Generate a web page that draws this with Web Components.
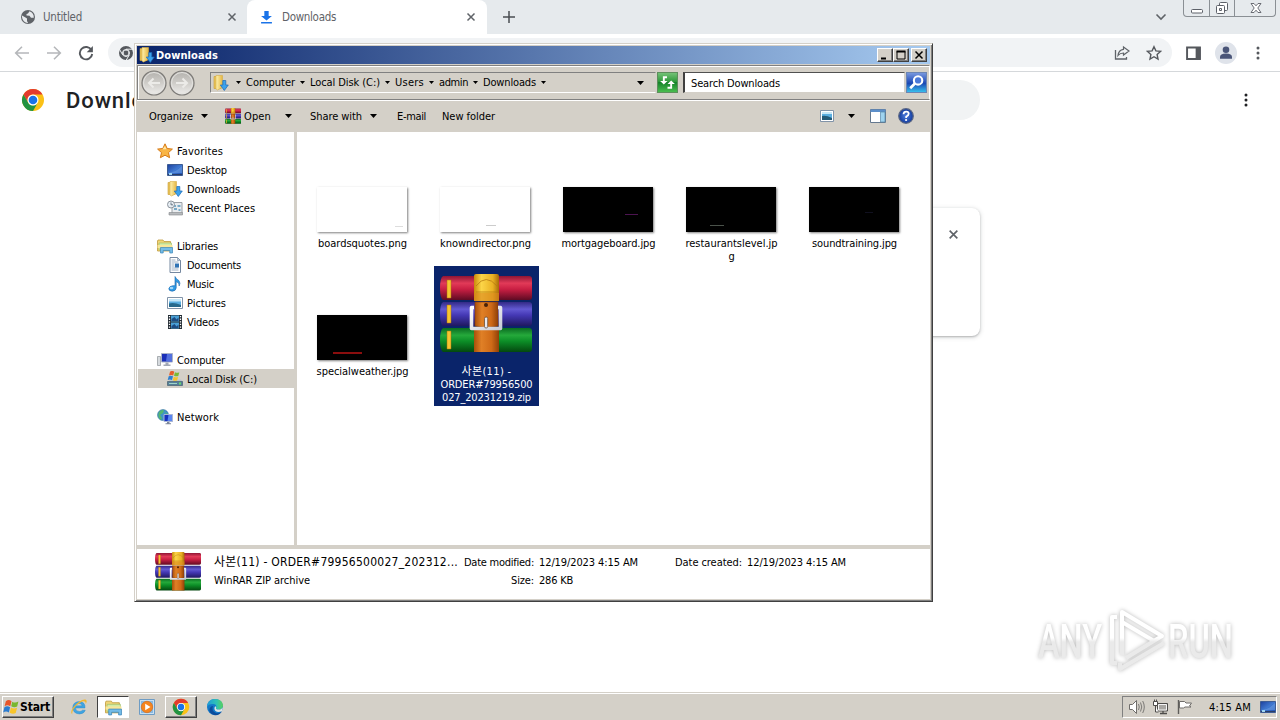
<!DOCTYPE html>
<html lang="en">
<head>
<meta charset="utf-8">
<title>Downloads</title>
<style>
  body {
    margin: 0;
    width: 1280px;
    height: 720px;
    overflow: hidden;
    background: #fff;
    color: #000;
    font: 11px/13px "DejaVu Sans Condensed", "DejaVu Sans", "Noto Sans CJK KR", sans-serif;
  }
</style>
</head>
<body>
<desktop-screen></desktop-screen>

<script>
// ---------- icons ----------
const downloadFolder = `
  <defs><linearGradient id="f" x2="1"><stop stop-color="#fff3b0"/><stop offset="1" stop-color="#e3b542"/></linearGradient></defs>
  <path d="M1 1.5h7v12H1z" fill="#e9c55c" stroke="#c99c33" stroke-width=".6"/>
  <path d="M3 .5h6.500v12L4.500 15 3 14z" fill="url(#f)" stroke="#d6ac45" stroke-width=".6"/>
  <path d="M9.800 5.500h3v4.500h2.500L11.300 15.500 7.300 10h2.500z" fill="#3ba2ec" stroke="#1b69b5" stroke-width=".7"/>`;

const books = `
  <defs>
    <linearGradient id="r" y2="1" x2="0"><stop stop-color="#8f1534"/><stop offset=".3" stop-color="#e23a58"/><stop offset=".55" stop-color="#c91f43"/><stop offset="1" stop-color="#5e0b23"/></linearGradient>
    <linearGradient id="b" y2="1" x2="0"><stop stop-color="#332a86"/><stop offset=".3" stop-color="#6259d2"/><stop offset=".55" stop-color="#4438b4"/><stop offset="1" stop-color="#1f1860"/></linearGradient>
    <linearGradient id="g" y2="1" x2="0"><stop stop-color="#0b6b21"/><stop offset=".3" stop-color="#25a93b"/><stop offset=".55" stop-color="#0c8e27"/><stop offset="1" stop-color="#04480f"/></linearGradient>
    <linearGradient id="o"><stop stop-color="#a9500b"/><stop offset=".3" stop-color="#e08026"/><stop offset=".7" stop-color="#cf6a17"/><stop offset="1" stop-color="#8f4008"/></linearGradient>
    <linearGradient id="y"><stop stop-color="#c98a0a"/><stop offset=".3" stop-color="#fcd548"/><stop offset=".75" stop-color="#eab123"/><stop offset="1" stop-color="#a86a08"/></linearGradient>
    <linearGradient id="s" y2="1"><stop stop-color="#fff"/><stop offset="1" stop-color="#c9ccd6"/></linearGradient>
  </defs>
  <path d="M3 2h86q3 0 3 3v18q0 3-3 3H3q-3-2-3-12T3 2z" fill="url(#r)"/>
  <path d="M3 28h86q3 0 3 3v18q0 3-3 3H3q-3-2-3-12t3-12z" fill="url(#b)"/>
  <path d="M3 54h86q3 0 3 3v18q0 3-3 3H3q-3-2-3-12t3-12z" fill="url(#g)"/>
  <path d="M7 6h4v18H7zM7 31h4v18H7zM7 57h4v18H7z" fill="#f7c531" stroke="#a8700c" stroke-width=".5"/>
  <path d="M34 55h25v23H34z" fill="url(#o)"/>
  <path d="M35 28h23v24q-11 3-23 0z" fill="url(#o)" stroke="#8a3c06" stroke-width=".6"/>
  <path d="M34 2q0-2 2-2h21q2 0 2 2v25H34z" fill="url(#y)"/>
  <path d="M36 12q10-13 21 0M36 18h21" fill="none" stroke="#b87a12" stroke-width=".8"/>
  <path d="M34 19h25v8H34z" fill="#d9861c" opacity=".6"/>
  <circle cx="46" cy="31" r="2" fill="#4a2206"/>
  <path d="M34 33.500H31.500v21h29v-21H58" fill="none" stroke="url(#s)" stroke-width="3.600" stroke-linejoin="round"/>
  <rect x="44.500" y="43" width="3.200" height="11" rx="1.500" fill="#e9e9f0" stroke="#5b4332" stroke-width=".7"/>`;

const chromeLogo = `
  <circle cx="12" cy="12" r="11" fill="#fbc116"/>
  <path d="M2.470 6.500A11 11 0 0 1 21.530 6.500H12A5.500 5.500 0 0 0 7.240 14.750z" fill="#e33b2e"/>
  <path d="M2.470 6.500A11 11 0 0 0 12 23l4.760-8.250A5.500 5.500 0 0 1 7.240 14.750z" fill="#229342"/>
  <circle cx="12" cy="12" r="5.500" fill="#fff"/><circle cx="12" cy="12" r="4.300" fill="#1a73e8"/>`;

const screen = `
  <defs><linearGradient id="d" x2="1" y2="1"><stop stop-color="#1c3f9c"/><stop offset=".5" stop-color="#3f78d0"/><stop offset="1" stop-color="#1a4bb0"/></linearGradient></defs>
  <path d="M.5 2.500h15v11H.5z" fill="url(#d)" stroke="#3d5c93"/>
  <path d="M1 11q7 0 14-7v7z" fill="#75a8e8" opacity=".5"/><path d="M1 12h14v1H1z" fill="#2a3d66"/><path d="M2 11h3v2H2z" fill="#9fd4f1"/>`;

// name: [viewBox, markup]
const ICONS = {
  globe: ['0 0 16 16', `<circle cx="8" cy="8" r="7" fill="#5f6368"/><path d="M2 6.500l3.500 2 1.500 1v2.500l1.200 2.300Q2.500 13.500 2 8zM9.500 2.300L8 4.500 6.500 5v1.500l3 .3 1.500 2h2.800Q14 4 9.500 2.300z" fill="#e7eaed"/>`],
  x: ['0 0 10 10', `<path d="M1.500 1.500l7 7m0-7l-7 7" stroke="currentColor" stroke-width="1.500"/>`],
  dlblue: ['0 0 12 14', `<path d="M4 1h4v5h3L6 10.500 1 6h3zM1 12h10v1.600H1z" fill="#1a73e8"/>`],
  plus: ['0 0 12 12', `<path d="M6 0v12M0 6h12" stroke="#4a4d51" stroke-width="1.500"/>`],
  back: ['0 0 16 16', `<path d="M15 8H2M8 1.700L1.700 8 8 14.300" fill="none" stroke="currentColor" stroke-width="1.600"/>`],
  forward: ['0 0 16 16', `<path d="M1 8h13M8 1.700L14.300 8 8 14.300" fill="none" stroke="currentColor" stroke-width="1.600"/>`],
  reload: ['0 0 16 16', `<path d="M13.500 5.200A6.200 6.200 0 1 0 14.200 9" fill="none" stroke="#55585d" stroke-width="1.900"/><path d="M14.900 1v6.200H8.700z" fill="#55585d"/>`],
  chromegray: ['0 0 16 16', `<circle cx="8" cy="8" r="5" fill="none" stroke="#55585d" stroke-width="4"/><circle cx="8" cy="8" r="2.400" fill="#55585d"/><path d="M8 4.200h7M4.700 9.900L1.300 4M11.300 9.900L8 15.500" stroke="#f1f3f4" stroke-width="1"/><circle cx="8" cy="8" r="3.500" fill="none" stroke="#f1f3f4"/>`],
  chevron: ['0 0 12 8', `<path d="M1.500 1.500L6 6l4.500-4.500" fill="none" stroke="#5f6368" stroke-width="1.600"/>`],
  share: ['0 0 16 16', `<path d="M1.500 5v9h11v-2" fill="none" stroke="#5f6368" stroke-width="1.300"/><path d="M9.500 2l5.500 4-5.500 4V8Q6 8 4 10.500 4.500 5 9.500 4.300z" fill="none" stroke="#5f6368" stroke-width="1.200"/>`],
  star: ['0 0 16 16', `<path d="M8 1.700l1.900 4.200 4.600.5-3.400 3.100.9 4.500-4-2.300L4 14l.9-4.500L1.500 6.400l4.600-.5z" fill="none" stroke="#55585d" stroke-width="1.400"/>`],
  side: ['0 0 14 14', `<path d="M1 1.500h12v11.500H1z" fill="#fff" stroke="#55585d" stroke-width="1.800"/><path d="M9 1h4.500v12H9z" fill="#55585d"/>`],
  person: ['0 0 22 22', `<circle cx="11" cy="11" r="11" fill="#dfe3ea"/><circle cx="11" cy="7.700" r="3.300" fill="#4a5578"/><path d="M5 16.800V15q0-3.500 6-3.500t6 3.500v1.800z" fill="#4a5578"/>`],
  dots: ['0 0 4 14', `<circle cx="2" cy="2" r="1.500" fill="currentColor"/><circle cx="2" cy="7" r="1.500" fill="currentColor"/><circle cx="2" cy="12" r="1.500" fill="currentColor"/>`],
  winmin: ['0 0 14 14', `<rect x="1.500" y="8.500" width="11" height="3.500" rx="1" fill="#fff" stroke="#5c6068"/>`],
  winrest: ['0 0 14 14', `<rect x="4.500" y="1.500" width="8" height="8" rx="1" fill="#fff" stroke="#5c6068"/><rect x="1.500" y="4.500" width="8" height="8" rx="1" fill="#fff" stroke="#5c6068"/><path d="M4.500 7.500h2v2h-2z" fill="#fff" stroke="#5c6068"/>`],
  winclose: ['0 0 14 14', `<path d="M2 2.500h3l2 2.300 2-2.300h3L8.800 7l3.200 4.500H9L7 9.200l-2 2.300H2L5.200 7z" fill="#fff" stroke="#5c6068" stroke-width=".9"/>`],
  chrome: ['0 0 24 24', chromeLogo],
  dlfolder: ['0 0 16 16', downloadFolder],
  rar: ['0 0 92 79', books],
  desktop: ['0 0 16 16', screen],
  navl: ['0 0 26 26', `<defs><linearGradient id="c" x2="0" y2="1"><stop stop-color="#b2b0ac"/><stop offset=".5" stop-color="#cfcdc9"/><stop offset="1" stop-color="#efeeec"/></linearGradient></defs><circle cx="13" cy="13" r="12" fill="url(#c)" stroke="#7c7a77" stroke-width="1.200"/><circle cx="13" cy="13" r="10.500" fill="none" stroke="#e4e3e0"/><path d="M19 13H8.500M12.500 8.500L8 13l4.500 4.500" fill="none" stroke="#ecebe8" stroke-width="2"/>`],
  navr: ['0 0 26 26', `<defs><linearGradient id="c" x2="0" y2="1"><stop stop-color="#b2b0ac"/><stop offset=".5" stop-color="#cfcdc9"/><stop offset="1" stop-color="#efeeec"/></linearGradient></defs><circle cx="13" cy="13" r="12" fill="url(#c)" stroke="#7c7a77" stroke-width="1.200"/><circle cx="13" cy="13" r="10.500" fill="none" stroke="#e4e3e0"/><path d="M7 13h10.500M13.500 8.500L18 13l-4.500 4.500" fill="none" stroke="#ecebe8" stroke-width="2"/>`],
  arrow: ['0 0 7 4', `<path d="M0 0h7L3.500 4z" fill="#000"/>`],
  refresh: ['0 0 20 20', `<defs><linearGradient id="k" x2="0" y2="1"><stop stop-color="#77c47a"/><stop offset=".45" stop-color="#2f9a3b"/><stop offset=".5" stop-color="#15832a"/><stop offset="1" stop-color="#4cc050"/></linearGradient></defs><path d="M.5.5h19v19H.5z" fill="url(#k)" stroke="#5d8f5c"/><path d="M9.500 5H6.500v4M13.500 10.500V15h-3.500" fill="none" stroke="#fff" stroke-width="1.800"/><path d="M3 8.500h7L6.500 12zM10 11.500h7L13.500 8z" fill="#fff"/>`],
  search: ['0 0 20 20', `<defs><linearGradient id="k" x2="0" y2="1"><stop stop-color="#7c9be0"/><stop offset=".45" stop-color="#2a55bd"/><stop offset=".55" stop-color="#1b49b4"/><stop offset="1" stop-color="#39c5f0"/></linearGradient></defs><path d="M.5.5h19v19H.5z" fill="url(#k)" stroke="#6b85b4"/><circle cx="11.500" cy="8" r="4" fill="#4b79d8" stroke="#fff" stroke-width="2"/><path d="M8.500 11l-4.500 4.500" stroke="#fff" stroke-width="2.600"/>`],
  min: ['0 0 10 10', `<path d="M1 7.500h5v2H1z" fill="#000"/>`],
  max: ['0 0 10 10', `<path d="M1 1.500h8v7.500H1z" fill="none" stroke="#000"/><path d="M.5.5h9v2h-9z"/>`],
  close: ['0 0 10 10', `<path d="M1.500 1.500l7 7m0-7l-7 7" stroke="#000" stroke-width="1.500"/>`],
  view: ['0 0 14 12', `<path d="M.5.500h13v11H.5z" fill="#fff" stroke="#8193a8"/><path d="M2 2h10v8H2z" fill="#5aaee0"/><path d="M2 10V6q4-1 10 2v2z" fill="#245a78"/><path d="M2 2h10v2H2z" fill="#c6e7f8"/>`],
  pane: ['0 0 16 14', `<path d="M.5.500h15v13H.5z" fill="#fff" stroke="#64788f"/><path d="M.5.500h15v2.500H.5z" fill="#5c8fca"/><path d="M10.500 3h4.500v10h-4.500z" fill="#9fd3ef" stroke="#5687a8" stroke-width=".7"/>`],
  help: ['0 0 16 16', `<defs><radialGradient id="h"><stop stop-color="#4f80df"/><stop offset="1" stop-color="#123a9c"/></radialGradient></defs><circle cx="8" cy="8" r="7.300" fill="url(#h)" stroke="#5b6784" stroke-width="1.200"/><path d="M5.500 6.200Q5.700 3.600 8.200 3.600q2.500 0 2.500 2.100 0 1.400-2.500 3v1.300" fill="none" stroke="#fff" stroke-width="1.800"/><circle cx="8.100" cy="12" r="1.100" fill="#fff"/>`],
  fav: ['0 0 16 16', `<path d="M8 .8l2.200 4.700 5.200.6-3.900 3.500 1.100 5.100L8 12.200l-4.600 2.500 1.100-5.100L.6 6.100l5.200-.6z" fill="#f9b545" stroke="#d67a18"/><path d="M8 3l1.400 3.300H5.500z" fill="#ffe6a6"/>`],
  recent: ['0 0 16 16', `<path d="M5 2.500h10v11H5z" fill="#e9ecef" stroke="#9aa0a6"/><path d="M7 5h2v2H7zm3.500 0h3v2h-3zM7 8h3v2H7zm4.500 1h2v2h-2z" fill="#78aac8"/><path d="M2 12.500h13.500V15H2z" fill="#b7babd" stroke="#84888c" stroke-width=".6"/><circle cx="4" cy="4.500" r="3.500" fill="#e6edf3" stroke="#8c949c"/><path d="M4 2.500v2.300h2" fill="none" stroke="#52606c" stroke-width=".8"/>`],
  lib: ['0 0 16 16', `<path d="M.5 3V13h13V3.500H7L6 2H1z" fill="#f0d576" stroke="#bf9b3c" stroke-width=".8"/><path d="M2 5h12.500v7H2z" fill="#d3eca6" stroke="#9cba65" stroke-width=".6"/><path d="M.5 7h15v3H.5z" fill="#f8e69a"/><path d="M3.500 15V9.500h12V15h-2.700v-2.500H6.200V15z" fill="#74bce8" stroke="#3b86b9" stroke-width=".7"/>`],
  doc: ['0 0 16 16', `<path d="M3 .5h7.500l3 3v12H3z" fill="#fff" stroke="#7588a0"/><path d="M10.500.5v3h3z" fill="#c7d5e4" stroke="#7588a0" stroke-width=".6"/><path d="M4.500 3h4M4.500 5h7M4.500 7h3M4.500 9h3M4.500 11h7M4.500 13h7" stroke="#9eb0c3"/><path d="M8 6.500h4v4H8z" fill="#3174b4"/>`],
  music: ['0 0 16 16', `<path d="M8 .5q1 2.500 4 4.200 1.800 2.500.2 5.300.5-3-3-4.500V12q-.3 3-4 3.200-3.400-.2-3.400-2.500.3-2.600 4.200-3H8z" fill="#2e9ae6" stroke="#1765ab" stroke-width=".6"/><ellipse cx="4.500" cy="12" rx="1.800" ry="1.200" fill="#9ed6fa"/>`],
  pic: ['0 0 16 16', `<path d="M.5 2.500h15v11H.5z" fill="#fff" stroke="#8193a8"/><path d="M2 4h12v8H2z" fill="#5aaee0"/><path d="M2 4h12v2.500H2z" fill="#c6e7f8"/><path d="M2 12V8.500q5-1.500 12 1.500v2z" fill="#27698c"/>`],
  video: ['0 0 16 16', `<path d="M1 1h14v14H1z" fill="#222b33"/><path d="M4 1.500h8v6H4zM4 8.500h8v6H4z" fill="#4aa0d6"/><path d="M4.500 5l3-2 2 2.500 2-2v3.500h-7zM4.500 12l3-2 2 2.500 2-2V14h-7z" fill="#1d4c82"/><path d="M2.500 2v12M13.500 2v12" stroke="#fff" stroke-width="1.300" stroke-dasharray="1.300 1.300"/>`],
  computer: ['0 0 16 16', `<path d="M.5 4.500h3v9h-3z" fill="#d6dade" stroke="#8c9298" stroke-width=".7"/><path d="M4.500 1.500h11v8.500h-11z" fill="#1a2fb8" stroke="#aab3c8"/><path d="M10 2h5v7.500H9z" fill="#6587ec" opacity=".75"/><path d="M8.500 10.500h3v2h2v1.500h-7v-1.500h2z" fill="#a2a8b4"/>`],
  disk: ['0 0 16 16', `<path d="M1.500 10.500L3 8.500h11l1.500 2z" fill="#b9c5cf"/><path d="M.5 10.500h15v4H.5z" fill="#567e98" stroke="#44606f" stroke-width=".7"/><path d="M2 12h8v1H2z" fill="#9fd6c9"/><path d="M12 11.500h2v2h-2z" fill="#66e069"/><path d="M3 .7q2-1.500 4.300 0L6.200 4.500q-2-1.200-4.200 0z" fill="#e85d2a"/><path d="M8 1.300q2 1 4.300 0l-1 3.600q-2 1-4.300-.2z" fill="#7bb934"/><path d="M1.700 5.300q2-1.200 4.300 0L5 9q-2-1.200-4.300 0z" fill="#2d7fd0"/><path d="M6.800 5.700q2 1.200 4.300.2l-1 3.500q-2 1-4.300-.2z" fill="#f6c22b"/>`],
  network: ['0 0 16 16', `<circle cx="6" cy="6" r="5.500" fill="#3f93c8" stroke="#27688f" stroke-width=".5"/><path d="M2 3q3-3 5-1.500L6 4 3 6 5 9 4 11Q0 8 2 3zM8 3l3 2-1 2z" fill="#54b672"/><path d="M7 5.500h8.500v7H7z" fill="#1630c0" stroke="#aab6d4"/><path d="M11.500 6h3.500v6h-4.500z" fill="#5a86f0"/><path d="M10 13h2.500v1.200H14v1H8.500v-1H10z" fill="#7d8799"/>`],
  flagwin: ['0 0 18 16', `<path d="M3 2.200q3-2.200 6 0L7.700 7.200q-3-1.700-6 0z" fill="#e8562a"/><path d="M9.800 2.700q3 1.800 6.500-.2L15 7.500q-3 1.500-6.300-.2z" fill="#79b72f"/><path d="M1.500 8.200q3-1.800 6 0L6.200 13.400q-3-1.700-6 0z" fill="#2b7cd0"/><path d="M8.400 8.600q3 1.800 6.500.2L13.500 14q-3 1.500-6.400-.3z" fill="#f8c52a"/>`],
  ie: ['0 0 18 18', `<path d="M15 10H5.500q.3 3.500 4 3.500 2 0 2.800-1.300h3Q14 16 9.500 16 3 15.500 2.700 9.700 3 3.800 9.200 3.500q6.300.3 5.800 6.500zM5.600 7.800h6.500Q11.700 5.500 9 5.500q-2.700 0-3.400 2.300z" fill="#3da4e2" fill-rule="evenodd" stroke="#2583c4" stroke-width=".4"/><path d="M2.500 16.500Q-.5 14.500 3.500 9 10.500.7 15.500 1.500q2.200 1 .3 4.500 0-3.700-3.800-2.500-5 2.500-8.500 7.500Q1.500 15 2.500 16.500z" fill="#f1b72f"/>`],
  wmp: ['0 0 16 16', `<path d="M.5.500h15v15H.5z" fill="#c7e0f3" stroke="#6e9cc4"/><path d="M2 2h12v12H2z" fill="#8ab8de"/><circle cx="8" cy="8" r="5.700" fill="#f5851f" stroke="#d8640a" stroke-width=".6"/><path d="M6.200 4.800L11.500 8l-5.300 3.200z" fill="#fff"/>`],
  edge: ['0 0 18 18', `<defs><linearGradient id="e" x2="1"><stop stop-color="#1f9bd8"/><stop offset=".6" stop-color="#2fc2b4"/><stop offset="1" stop-color="#5ad15a"/></linearGradient></defs><circle cx="9" cy="9" r="8" fill="#1378c8"/><path d="M1 9Q1.500 1 9 1q7.500.3 8 6.500-.3 4-4.300 4-3.700 0-2.500-2Q11 6 7 6 2 6 1 9z" fill="url(#e)"/><path d="M7 8q-2 5 3 7 3 .7 6-1.500Q13 18 8 17q-5.500-2-4.500-6Q4.500 8 7 8z" fill="#0c4c9c"/><path d="M10.200 9.500q-1.200 2 2.500 2 3.300 0 4.200-2.800L16.300 13Q12 15 9.500 13q-2-2-.3-5z" fill="#e0e4e4"/>`],
  speaker: ['0 0 17 16', `<path d="M1.500 5.500h3l4-4v13l-4-4h-3z" fill="#fff" stroke="#6f6d6a"/><path d="M10.500 5q1.500 3 0 6M12.500 3.500q2.500 4.500 0 9M14.700 2q3.200 6 0 12" fill="none" stroke="#7b7976"/>`],
  net: ['0 0 17 16', `<path d="M5.500 4.500h10v7.500h-10z" fill="#a9a7a3" stroke="#4e4c4a"/><path d="M6.500 5.500h8v5.500h-8z" fill="none" stroke="#f5f5f5"/><path d="M8 14.500h7M11 12v2.500" stroke="#4e4c4a" stroke-width="1.300"/><path d="M1.500 2.500h4v4h-4zM2.500.5v2M4.500.5v2M3.500 6.500v6.500h3" fill="#fff" stroke="#4e4c4a"/>`],
  flag: ['0 0 17 16', `<path d="M2.500 1v14" stroke="#5e5c5a" stroke-width="1.400"/><path d="M3.500 2.500h5l1.500 1.500h5.500l-2 3 1.500 1H9L7.500 9h-4z" fill="#fff" stroke="#6f6d6a"/>`]
};

class UiIcon extends HTMLElement {
  constructor() {
    super();
    this.attachShadow({ mode: 'open' });
  }

  connectedCallback() {
    const [box, body] = ICONS[this.getAttribute('name')];
    const w = this.getAttribute('w') || 16;
    const h = this.getAttribute('h') || w;
    this.shadowRoot.innerHTML = `
      <style>
        :host { display: block; flex: none; width: ${w}px; height: ${h}px; }
        svg { display: block; }
      </style>
      <svg width="${w}" height="${h}" viewBox="${box}" preserveAspectRatio="none">${body}</svg>`;
  }
}
customElements.define('ui-icon', UiIcon);

// One line of text, tracked so that it fills the width in `w`
class FitText extends HTMLElement {
  constructor() {
    super();
    this.attachShadow({ mode: 'open' });
    this.shadowRoot.innerHTML = `
      <style>
        :host { display: block; flex: none; }
        span { display: block; width: max-content; white-space: nowrap; }
      </style>
      <span><slot></slot></span>`;
  }

  connectedCallback() {
    const width = Number(this.getAttribute('w'));
    if (!width) return;
    const span = this.shadowRoot.querySelector('span');
    const natural = span.getBoundingClientRect().width;
    span.style.letterSpacing = (width - natural) / this.textContent.length + 'px';
    this.style.width = width + 'px';
  }
}
customElements.define('fit-text', FitText);

// ---------- browser ----------
class BrowserTab extends HTMLElement {
  constructor() {
    super();
    this.attachShadow({ mode: 'open' });
    this.shadowRoot.innerHTML = `
      <style>
        :host {
          display: flex; align-items: center; box-sizing: border-box;
          height: 34px; padding: 0 10px 0 20px; color: #5f6368;
          font: 11.500px "DejaVu Sans Condensed", sans-serif;
        }
        :host([active]) { background: #fff; border-radius: 8px 8px 0 0; padding: 0 11px 0 13px; }
        .label { margin-left: 7px; flex: 1; }
      </style>
      <slot name="icon"></slot>
      <div class="label"><slot></slot></div>
      <ui-icon name="x" w="10"></ui-icon>`;
  }
}
customElements.define('browser-tab', BrowserTab);

class BrowserWindow extends HTMLElement {
  constructor() {
    super();
    this.attachShadow({ mode: 'open' });
    this.shadowRoot.innerHTML = `
      <style>
        :host { display: flex; flex-direction: column; height: 692px; background: #fff; }
        .tabs { display: flex; height: 34px; background: #e6eaed; align-items: center; }
        .tabs browser-tab:first-child { width: 247px; }
        .tabs browser-tab:nth-child(2) { width: 240px; }
        .new { margin-left: 16px; flex: 1; }
        .caption {
          display: grid; grid-template-columns: 25px 25px 42px; width: 93px; height: 17px;
          margin: 0 4px 0 16px; align-self: start; box-sizing: border-box;
          border: 1px solid #8a8f94; border-top: 0; border-radius: 0 0 4px 4px;
        }
        .caption div { display: flex; justify-content: center; align-items: center; }
        .caption div + div { border-left: 1px solid #8a8f94; }
        .bar {
          display: flex; align-items: center; height: 37px; padding-left: 14px;
          border-bottom: 1px solid #d5d8db; color: #55585d;
        }
        .bar > ui-icon { margin-right: 16px; }
        .omni {
          display: flex; align-items: center; width: 1064px; height: 29px; margin-right: 14px;
          margin-left: -2px;
          box-sizing: border-box; padding: 0 10px; background: #f1f3f5; border-radius: 15px;
        }
        .omni .space { flex: 1; }
        .omni ui-icon:last-child { margin-left: 16px; }
        .head { display: flex; align-items: center; height: 56px; padding-left: 21px; }
        h1 { margin: 0 0 0 21px; font: 500 22px Roboto, sans-serif; letter-spacing: .9px; color: #202124; width: 234px; }
        .pill { width: 680px; height: 40px; border-radius: 20px; background: #f1f3f4; }
        .head > ui-icon:last-child { margin-left: 264px; }
        .card {
          display: flex; justify-content: flex-end; width: 680px; height: 128px; margin: 80px auto 0;
          box-sizing: border-box; padding: 21px; border-radius: 8px; color: #5f6368;
          box-shadow: 0 1px 2px rgba(60,64,67,.3), 0 1px 4px 1px rgba(60,64,67,.15);
        }
      </style>
      <div class="tabs">
        <browser-tab><ui-icon slot="icon" name="globe" w="16"></ui-icon><fit-text w="39">Untitled</fit-text></browser-tab>
        <browser-tab active><ui-icon slot="icon" name="dlblue" w="13" h="14"></ui-icon><fit-text w="54" style="margin-left:2px">Downloads</fit-text></browser-tab>
        <div class="new"><ui-icon name="plus" w="12"></ui-icon></div>
        <ui-icon name="chevron" w="12" h="8"></ui-icon>
        <div class="caption">
          <div><ui-icon name="winmin" w="14"></ui-icon></div>
          <div><ui-icon name="winrest" w="14"></ui-icon></div>
          <div><ui-icon name="winclose" w="14"></ui-icon></div>
        </div>
      </div>
      <div class="bar">
        <ui-icon name="back" w="16" style="color:#b5b7ba"></ui-icon>
        <ui-icon name="forward" w="16" style="color:#b5b7ba"></ui-icon>
        <ui-icon name="reload" w="16"></ui-icon>
        <div class="omni">
          <ui-icon name="chromegray" w="16"></ui-icon>
          <div class="space"></div>
          <ui-icon name="share" w="16"></ui-icon>
          <ui-icon name="star" w="16"></ui-icon>
        </div>
        <ui-icon name="side" w="15" h="14" style="margin-right:14px"></ui-icon>
        <ui-icon name="person" w="22" style="margin-right:19px"></ui-icon>
        <ui-icon name="dots" w="4" h="14"></ui-icon>
      </div>
      <div class="head">
        <ui-icon name="chrome" w="24"></ui-icon>
        <h1>Downloads</h1>
        <div class="pill"></div>
        <ui-icon name="dots" w="4" h="14" style="color:#202124"></ui-icon>
      </div>
      <div class="card"><ui-icon name="x" w="11"></ui-icon></div>`;
  }
}
customElements.define('browser-window', BrowserWindow);

// ---------- explorer ----------
class NavItem extends HTMLElement {
  constructor() {
    super();
    this.attachShadow({ mode: 'open' });
  }

  connectedCallback() {
    this.shadowRoot.innerHTML = `
      <style>
        :host { display: flex; align-items: center; gap: 4px; height: 19px; padding-left: 20px; }
        :host([sub]) { padding-left: 30px; }
        :host([selected]) { background: #d4d0c8; margin-left: 1px; padding-left: 29px; }
        div { padding-top: 2px; }
      </style>
      <ui-icon name="${this.getAttribute('icon')}" w="16"></ui-icon>
      <div><slot></slot></div>`;
  }
}
customElements.define('nav-item', NavItem);

class FileItem extends HTMLElement {
  constructor() {
    super();
    this.attachShadow({ mode: 'open' });
  }

  connectedCallback() {
    this.shadowRoot.innerHTML = `
      <style>
        :host { display: flex; flex-direction: column; align-items: center; width: 105px; }
        .thumb { display: flex; align-items: flex-end; height: 94px; margin-bottom: 5px; }
        .pic {
          width: 90px; height: 45px; margin-right: 3px; background: var(--pic, #000);
          box-shadow: 1px 1px 2px rgba(0,0,0,.5);
        }
        .pic i { display: block; height: 1px; }
        :host([archive]) { background: #0a246a; color: #fff; height: 140px; }
        :host([archive]) .thumb { align-items: flex-start; box-sizing: border-box; padding: 8px 1px 0 0; }
        .name { display: flex; flex-direction: column; align-items: center; margin-right: 2px; }
        :host([archive]) .name { margin-right: 0; }
      </style>
      <div class="thumb"><slot name="thumb"><div class="pic"><i></i></div></slot></div>
      <div class="name"><slot></slot></div>`;

    // faint mark inside the preview: x, y, width, height, colour
    const mark = this.getAttribute('mark');
    if (mark) {
      const [x, y, w, h, color] = mark.split(' ');
      this.shadowRoot.querySelector('.pic').style.display = 'flow-root';
      this.shadowRoot.querySelector('i').style.cssText =
        `margin: ${y}px 0 0 ${x}px; width: ${w}px; height: ${h}px; background: ${color};`;
    }
  }
}
customElements.define('file-item', FileItem);

class ExplorerWindow extends HTMLElement {
  constructor() {
    super();
    this.attachShadow({ mode: 'open' });
    this.shadowRoot.innerHTML = `
      <style>
        :host {
          display: flex; flex-direction: column; box-sizing: border-box;
          width: 799px; height: 559px; padding: 2px; background: #d4d0c8;
          border: 1px solid; border-color: #d4d0c8 #404040 #404040 #d4d0c8;
          box-shadow: inset 1px 1px #fff, inset -1px -1px #808080;
        }
        .title {
          display: flex; align-items: center; height: 18px; padding: 0 3px 0 2px;
          background: linear-gradient(90deg, #0a246a, #a6caf0); color: #fff; font-weight: bold;
        }
        .title .space { flex: 1; }
        .btn {
          display: flex; justify-content: center; align-items: center; width: 16px; height: 14px;
          box-sizing: border-box; background: #d4d0c8; border: 1px solid;
          border-color: #fff #404040 #404040 #fff; box-shadow: inset -1px -1px #808080;
        }
        .nav {
          display: flex; align-items: center; box-sizing: border-box; height: 35px;
          margin-top: 1px; padding-left: 3px;
          border: 1px solid #808080; border-right-color: #fff;
          box-shadow: inset 1px 1px #fff, 0 1px #fff;
        }
        .round { display: flex; gap: 2px; }
        .addr {
          display: flex; align-items: center; width: 446px; height: 21px; box-sizing: border-box;
          margin-left: 15px; border: 1px solid #808080; border-right-color: #d4d0c8; border-bottom-color: #fff;
          padding-left: 2px;
        }
        .addr ui-icon[name=arrow] { margin: 0 5px 0 6px; }
        .addr fit-text + ui-icon[name=arrow] { margin: 0 5px; }
        .field {
          display: flex; align-items: center; box-sizing: border-box; width: 222px; height: 21px;
          margin-left: 5px; padding: 1px 0 0 6px; background: #fff;
          border: 2px solid; border-color: #505050 #d4d0c8 #d4d0c8 #404040; border-width: 1px 1px 1px 2px;
        }
        .cmd { display: flex; align-items: center; height: 32px; padding-left: 12px; }
        .cmd .space { flex: 1; }
        .body { display: flex; height: 413px; }
        .tree { width: 157px; padding-top: 9px; background: #fff; box-sizing: border-box; }
        .tree .gap { height: 19px; }
        .files {
          flex: 1; margin-left: 3px; background: #fff; display: grid; align-content: start;
          grid-template-columns: repeat(5, 105px); grid-auto-rows: 128px; column-gap: 18px;
          align-items: start; padding: 6px 0 0 14px;
        }
        .details {
          display: flex; height: 50px; margin-top: 4px; background: #fff; box-sizing: border-box;
          padding: 3px 0 0 18px;
        }
        .grid {
          display: grid; grid-template-columns: 250px 70px 5px 99px 37px 67px 5px 99px;
          grid-auto-rows: 18px; align-items: center; margin: 1px 0 0 13px; height: 36px;
        }
        .grid fit-text { justify-self: start; }
        .grid .end { justify-self: end; }
        .big { font-size: 12px; }
      </style>
      <div class="title">
        <ui-icon name="dlfolder" w="16"></ui-icon>
        <fit-text w="62" style="margin-left:1px">Downloads</fit-text>
        <div class="space"></div>
        <div class="btn"><ui-icon name="min" w="10"></ui-icon></div>
        <div class="btn"><ui-icon name="max" w="10"></ui-icon></div>
        <div class="btn" style="margin-left:2px"><ui-icon name="close" w="10"></ui-icon></div>
      </div>

      <div class="nav">
        <div class="round">
          <ui-icon name="navl" w="26"></ui-icon>
          <ui-icon name="navr" w="26"></ui-icon>
        </div>
        <div class="addr">
          <ui-icon name="dlfolder" w="16"></ui-icon>
          <ui-icon name="arrow" w="5" h="3" style="margin-left:7px"></ui-icon><fit-text w="49">Computer</fit-text>
          <ui-icon name="arrow" w="5" h="3"></ui-icon><fit-text w="70">Local Disk (C:)</fit-text>
          <ui-icon name="arrow" w="5" h="3"></ui-icon><fit-text w="29">Users</fit-text>
          <ui-icon name="arrow" w="5" h="3"></ui-icon><fit-text w="29">admin</fit-text>
          <ui-icon name="arrow" w="5" h="3"></ui-icon><fit-text w="53">Downloads</fit-text>
          <ui-icon name="arrow" w="5" h="3"></ui-icon>
          <ui-icon name="arrow" w="7" h="4" style="margin-left:86px"></ui-icon>
        </div>
        <ui-icon name="refresh" w="21" style="margin-left:1px"></ui-icon>
        <div class="field"><fit-text w="89">Search Downloads</fit-text></div>
        <ui-icon name="search" w="21" style="margin-left:1px"></ui-icon>
      </div>

      <div class="cmd">
        <fit-text w="44">Organize</fit-text>
        <ui-icon name="arrow" w="7" h="4" style="margin-left:8px"></ui-icon>
        <ui-icon name="rar" w="16" style="margin:0 3px 0 17px"></ui-icon>
        <fit-text w="27">Open</fit-text>
        <ui-icon name="arrow" w="7" h="4" style="margin:0 18px 0 14px"></ui-icon>
        <fit-text w="52">Share with</fit-text>
        <ui-icon name="arrow" w="7" h="4" style="margin:0 20px 0 8px"></ui-icon>
        <fit-text w="29">E-mail</fit-text>
        <fit-text w="53" style="margin-left:16px">New folder</fit-text>
        <div class="space"></div>
        <ui-icon name="view" w="14" h="12"></ui-icon>
        <ui-icon name="arrow" w="7" h="4" style="margin:0 15px 0 14px"></ui-icon>
        <ui-icon name="pane" w="16" h="14"></ui-icon>
        <ui-icon name="help" w="16" style="margin:0 16px 0 12px"></ui-icon>
      </div>

      <div class="body">
        <div class="tree">
          <nav-item icon="fav"><fit-text w="46">Favorites</fit-text></nav-item>
          <nav-item sub icon="desktop"><fit-text w="40">Desktop</fit-text></nav-item>
          <nav-item sub icon="dlfolder"><fit-text w="53">Downloads</fit-text></nav-item>
          <nav-item sub icon="recent"><fit-text w="68">Recent Places</fit-text></nav-item>
          <div class="gap"></div>
          <nav-item icon="lib"><fit-text w="41">Libraries</fit-text></nav-item>
          <nav-item sub icon="doc"><fit-text w="54">Documents</fit-text></nav-item>
          <nav-item sub icon="music"><fit-text w="27">Music</fit-text></nav-item>
          <nav-item sub icon="pic"><fit-text w="39">Pictures</fit-text></nav-item>
          <nav-item sub icon="video"><fit-text w="32">Videos</fit-text></nav-item>
          <div class="gap"></div>
          <nav-item icon="computer"><fit-text w="48">Computer</fit-text></nav-item>
          <nav-item sub selected icon="disk"><fit-text w="70">Local Disk (C:)</fit-text></nav-item>
          <div class="gap"></div>
          <nav-item icon="network"><fit-text w="42">Network</fit-text></nav-item>
        </div>
        <div class="files">
          <file-item style="--pic:#fff" mark="78 39 8 1 #ddd"><fit-text w="89">boardsquotes.png</fit-text></file-item>
          <file-item style="--pic:#fff" mark="46 38 10 1 #ccc"><fit-text w="91">knowndirector.png</fit-text></file-item>
          <file-item mark="62 27 13 1 #4c1450"><fit-text w="94">mortgageboard.jpg</fit-text></file-item>
          <file-item mark="24 38 14 1 #4a524a"><fit-text w="92">restaurantslevel.jp</fit-text><fit-text w="6">g</fit-text></file-item>
          <file-item mark="56 25 8 1 #10101f"><fit-text w="85">soundtraining.jpg</fit-text></file-item>
          <file-item mark="16 37 29 2 #8a0e0e"><fit-text w="92">specialweather.jpg</fit-text></file-item>
          <file-item archive>
            <ui-icon slot="thumb" name="rar" w="92" h="79"></ui-icon>
            <fit-text w="50">사본(11) -</fit-text>
            <fit-text w="92">ORDER#79956500</fit-text>
            <fit-text w="89">027_20231219.zip</fit-text>
          </file-item>
        </div>
      </div>

      <div class="details">
        <ui-icon name="rar" w="46" h="39"></ui-icon>
        <div class="grid">
          <fit-text class="big" w="244">사본(11) - ORDER#79956500027_202312...</fit-text>
          <fit-text class="end" w="70">Date modified:</fit-text><i></i>
          <fit-text w="99">12/19/2023 4:15 AM</fit-text><i></i>
          <fit-text w="67">Date created:</fit-text><i></i>
          <fit-text w="99">12/19/2023 4:15 AM</fit-text>
          <fit-text w="96">WinRAR ZIP archive</fit-text>
          <fit-text class="end" w="23">Size:</fit-text><i></i>
          <fit-text w="34">286 KB</fit-text>
        </div>
      </div>`;
  }
}
customElements.define('explorer-window', ExplorerWindow);

// ---------- taskbar ----------
class TaskBar extends HTMLElement {
  constructor() {
    super();
    this.attachShadow({ mode: 'open' });
    this.shadowRoot.innerHTML = `
      <style>
        :host {
          display: flex; align-items: center; box-sizing: border-box; height: 28px;
          background: #d4d0c8; border-top: 1px solid #d4d0c8; box-shadow: inset 0 1px #fff;
          padding: 1px 3px 0 2px;
        }
        .raised { border: 1px solid; border-color: #fff #404040 #404040 #fff; box-shadow: inset -1px -1px #808080; }
        .start {
          display: flex; align-items: center; box-sizing: border-box; width: 52px; height: 22px;
          font-weight: bold; font-size: 12px; margin-right: 8px;
        }
        .slot {
          display: flex; justify-content: center; align-items: center; box-sizing: border-box;
          width: 32px; height: 22px; margin: 0 1px;
        }
        .pressed { background: #fff; border: 1px solid; border-color: #404040 #fff #fff #404040; }
        .space { flex: 1; }
        .tray {
          display: flex; align-items: center; box-sizing: border-box; width: 155px; height: 22px;
          border: 1px solid; border-color: #808080 #fff #fff #808080; padding-left: 5px; gap: 7px;
        }
      </style>
      <div class="start raised"><ui-icon name="flagwin" w="17" h="16"></ui-icon><fit-text w="30">Start</fit-text></div>
      <div class="slot"><ui-icon name="ie" w="18"></ui-icon></div>
      <div class="slot pressed"><ui-icon name="lib" w="17"></ui-icon></div>
      <div class="slot"><ui-icon name="wmp" w="16"></ui-icon></div>
      <div class="slot raised"><ui-icon name="chrome" w="18"></ui-icon></div>
      <div class="slot"><ui-icon name="edge" w="18"></ui-icon></div>
      <div class="space"></div>
      <div class="tray">
        <ui-icon name="speaker" w="17" h="16"></ui-icon>
        <ui-icon name="net" w="17" h="16"></ui-icon>
        <ui-icon name="flag" w="17" h="16"></ui-icon>
        <fit-text w="42" style="margin-left:9px">4:15 AM</fit-text>
        <ui-icon name="desktop" w="16" style="margin-left:2px"></ui-icon>
      </div>`;
  }
}
customElements.define('task-bar', TaskBar);

class RunWatermark extends HTMLElement {
  constructor() {
    super();
    this.attachShadow({ mode: 'open' });
    this.shadowRoot.innerHTML = `
      <style>
        :host { display: block; width: 210px; height: 70px; }
        svg { display: block; overflow: visible; filter: drop-shadow(0 0 2px rgba(0,0,0,.28)); }
        text { font: 500 48px Roboto, sans-serif; fill: url(#w); }
      </style>
      <svg width="210" height="70">
        <defs><linearGradient id="w" gradientUnits="userSpaceOnUse" x1="0" y1="32" x2="0" y2="36"><stop stop-color="#fff"/><stop offset="1" stop-color="#eaeaea"/></linearGradient></defs>
        <text x="8" y="52" textLength="64" lengthAdjust="spacingAndGlyphs">ANY</text>
        <text x="138" y="52" textLength="65" lengthAdjust="spacingAndGlyphs">RUN</text>
        <g fill="none" stroke="url(#w)" stroke-width="4" stroke-linejoin="round">
          <path d="M92 49V6l40 24-36 22"/>
          <path d="M87 11h-5v46h5M90 57v6l44-26"/>
          <path d="M92 16l32 19"/>
        </g>
      </svg>`;
  }
}
customElements.define('run-watermark', RunWatermark);

class DesktopScreen extends HTMLElement {
  constructor() {
    super();
    this.attachShadow({ mode: 'open' });
    this.shadowRoot.innerHTML = `
      <style>
        :host { display: block; position: relative; width: 1280px; height: 720px; }
        explorer-window { position: absolute; left: 134px; top: 43px; }
        run-watermark { position: absolute; left: 1030px; top: 606px; }
      </style>
      <browser-window></browser-window>
      <task-bar></task-bar>
      <explorer-window></explorer-window>
      <run-watermark></run-watermark>`;
  }
}
customElements.define('desktop-screen', DesktopScreen);
</script>
</body>
</html>
